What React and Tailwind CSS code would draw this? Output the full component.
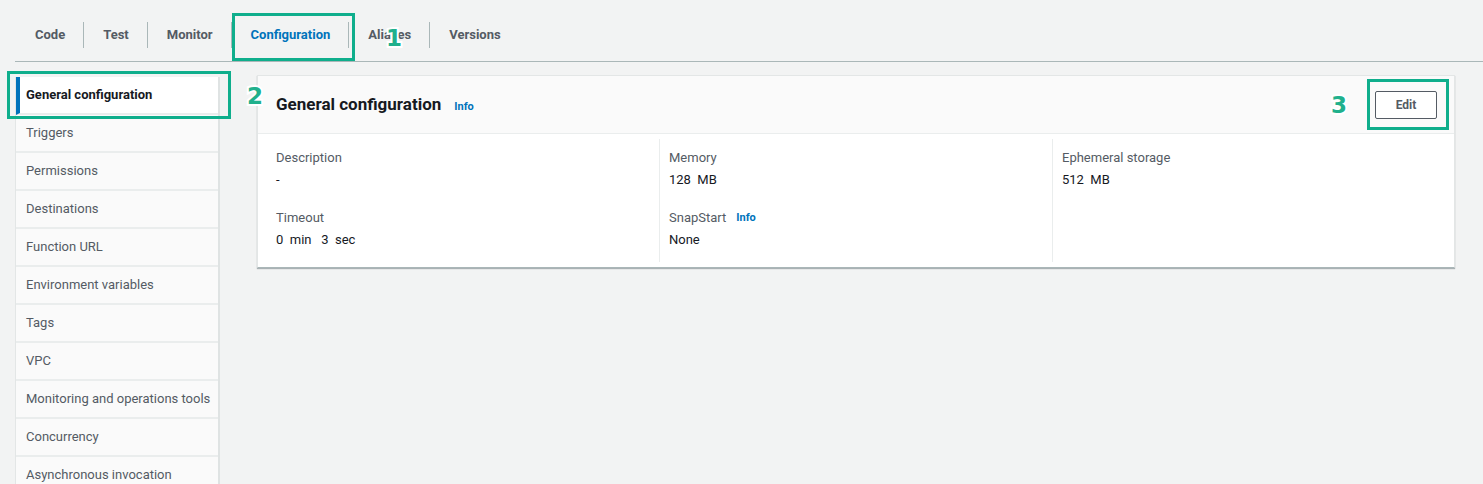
const tabs = ["Code", "Test", "Monitor", "Configuration", "Aliases", "Versions"];
const navItems = [
  "General configuration",
  "Triggers",
  "Permissions",
  "Destinations",
  "Function URL",
  "Environment variables",
  "Tags",
  "VPC",
  "Monitoring and operations tools",
  "Concurrency",
  "Asynchronous invocation",
  "Code signing",
];

function Marker({ children, className }) {
  return (
    <span
      className={
        "absolute font-['DejaVu_Sans',sans-serif] text-[23px] font-bold leading-none text-[#20b08c] [paint-order:stroke_fill] [-webkit-text-stroke:4px_#fff] " +
        className
      }
    >
      {children}
    </span>
  );
}

function Field({ label, value, info }) {
  return (
    <div>
      <div className="flex items-center gap-[10px] text-[13px] leading-[20px] text-[#545b64]">
        {label}
        {info && <span className="text-[11px] font-bold text-[#0073bb]">Info</span>}
      </div>
      <div className="mt-[2px] text-[13px] leading-[20px] text-[#16191f] whitespace-pre">{value}</div>
    </div>
  );
}

export default function App() {
  return (
    <div className="relative h-[484px] w-full overflow-hidden bg-[#f2f3f3] font-[Roboto,sans-serif]">
      {/* tabs */}
      <div className="ml-[15px] flex h-[62px] items-center border-b border-[#aab7b8] pl-px pt-[8px]">
        {tabs.map((t, i) => (
          <div key={t} className="flex items-center">
            {i > 0 && <div className="h-[26px] w-px bg-[#aab7b8]" />}
            <div
              className={
                "pl-[19px] pr-[18px] text-[13px] font-bold " +
                (t === "Configuration" ? "text-[#0073bb]" : "text-[#545b64]")
              }
            >
              {t}
            </div>
          </div>
        ))}
      </div>

      <div className="mt-[15px] flex items-start gap-[37px] pl-[15px] pr-[28px]">
        {/* side nav */}
        <div className="w-[205px] shrink-0 border-l border-r-2 border-[#e3e6e6] border-r-[#dfe3e3]">
          {navItems.map((n, i) =>
            i === 0 ? (
              <div
                key={n}
                className="flex h-[38px] items-center border-b-2 border-[#eaeded] border-l-4 border-l-[#0073bb] bg-white pl-[6px] text-[13px] font-bold text-[#16191f]"
              >
                {n}
              </div>
            ) : (
              <div
                key={n}
                className="flex h-[38px] items-center border-b-2 border-[#eaeded] bg-[#fafafa] pl-[10px] text-[13px] text-[#545b64]"
              >
                {n}
              </div>
            )
          )}
        </div>

        {/* card */}
        <div className="-mt-[2px] flex-1 border border-[#e3e6e6] border-b-[#aab7b8] bg-white shadow-[0_1px_1px_rgba(0,28,36,0.3)]">
          <div className="flex h-[58px] items-center justify-between border-b border-[#eaeded] bg-[#fafafa] pl-[18px] pr-[17px]">
            <div className="flex items-baseline gap-[13px]">
              <span className="text-[17px] font-bold text-[#16191f]">General configuration</span>
              <span className="text-[11px] font-bold text-[#0073bb]">Info</span>
            </div>
            <button className="h-[28px] w-[62px] rounded-[2px] border border-[#545b64] bg-white text-[12px] font-bold text-[#545b64]">
              Edit
            </button>
          </div>
          <div className="grid grid-cols-[383px_393px_1fr] pl-[18px] pr-[18px] py-[5px]">
            <div className="space-y-[18px] pb-[12px] pt-[9px]">
              <Field label="Description" value="-" />
              <Field label="Timeout" value="0  min   3  sec" />
            </div>
            <div className="space-y-[18px] border-l border-[#eaeded] pb-[12px] pl-[9px] pt-[9px]">
              <Field label="Memory" value="128  MB" />
              <Field label="SnapStart" value="None" info />
            </div>
            <div className="space-y-[18px] border-l border-[#eaeded] pb-[12px] pl-[9px] pt-[9px]">
              <Field label="Ephemeral storage" value="512  MB" />
            </div>
          </div>
        </div>
      </div>

      {/* annotation overlays */}
      <div className="absolute left-[232px] top-[13px] h-[48px] w-[123px] border-[3px] border-[#0fae8c]" />
      <Marker className="left-[386px] top-[27px]">1</Marker>
      <div className="absolute left-[7px] top-[71px] h-[48px] w-[224px] border-[3px] border-[#0fae8c]" />
      <Marker className="left-[247px] top-[85px]">2</Marker>
      <div className="absolute left-[1367px] top-[79px] h-[51px] w-[82px] border-[3px] border-[#0fae8c]" />
      <Marker className="left-[1331px] top-[94px]">3</Marker>
    </div>
  );
}
